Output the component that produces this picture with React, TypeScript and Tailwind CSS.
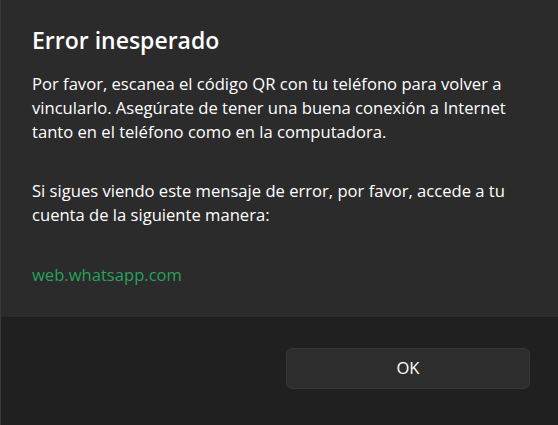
import React from "react";

const font = { fontFamily: '"Segoe UI", "Open Sans", sans-serif' };

export default function App() {
  return (
    <div
      className="w-[558px] h-[425px] flex flex-col border-l border-[#3a3a3a] bg-[#2b2b2b] text-white overflow-hidden"
      style={font}
    >
      <div className="px-[31px] pt-6 pb-[30px]">
        <h1 className="text-[23px] leading-[32px] font-semibold">Error inesperado</h1>
        <p className="mt-4 text-[16.6px] leading-[24px] w-[495px]">
          Por favor, escanea el código QR con tu teléfono para volver a vincularlo. Asegúrate
          de tener una buena conexión a Internet tanto en el teléfono como en la computadora.
        </p>
        <p className="mt-[35px] text-[16.6px] leading-[24px] w-[495px]">
          Si sigues viendo este mensaje de error, por favor, accede a tu cuenta de la
          siguiente manera:
        </p>
        <div className="mt-9 text-[16.6px] leading-[24px] text-[#25a25a]">web.whatsapp.com</div>
      </div>
      <div className="flex-1 flex justify-end items-start bg-[#202020] border-t border-[#1c1c1c] pt-[30px] pr-[28px]">
        <button className="w-[244px] h-[41px] rounded-[6px] bg-[#2d2d2d] border border-[#363636] text-[16.6px] text-white">
          OK
        </button>
      </div>
    </div>
  );
}
